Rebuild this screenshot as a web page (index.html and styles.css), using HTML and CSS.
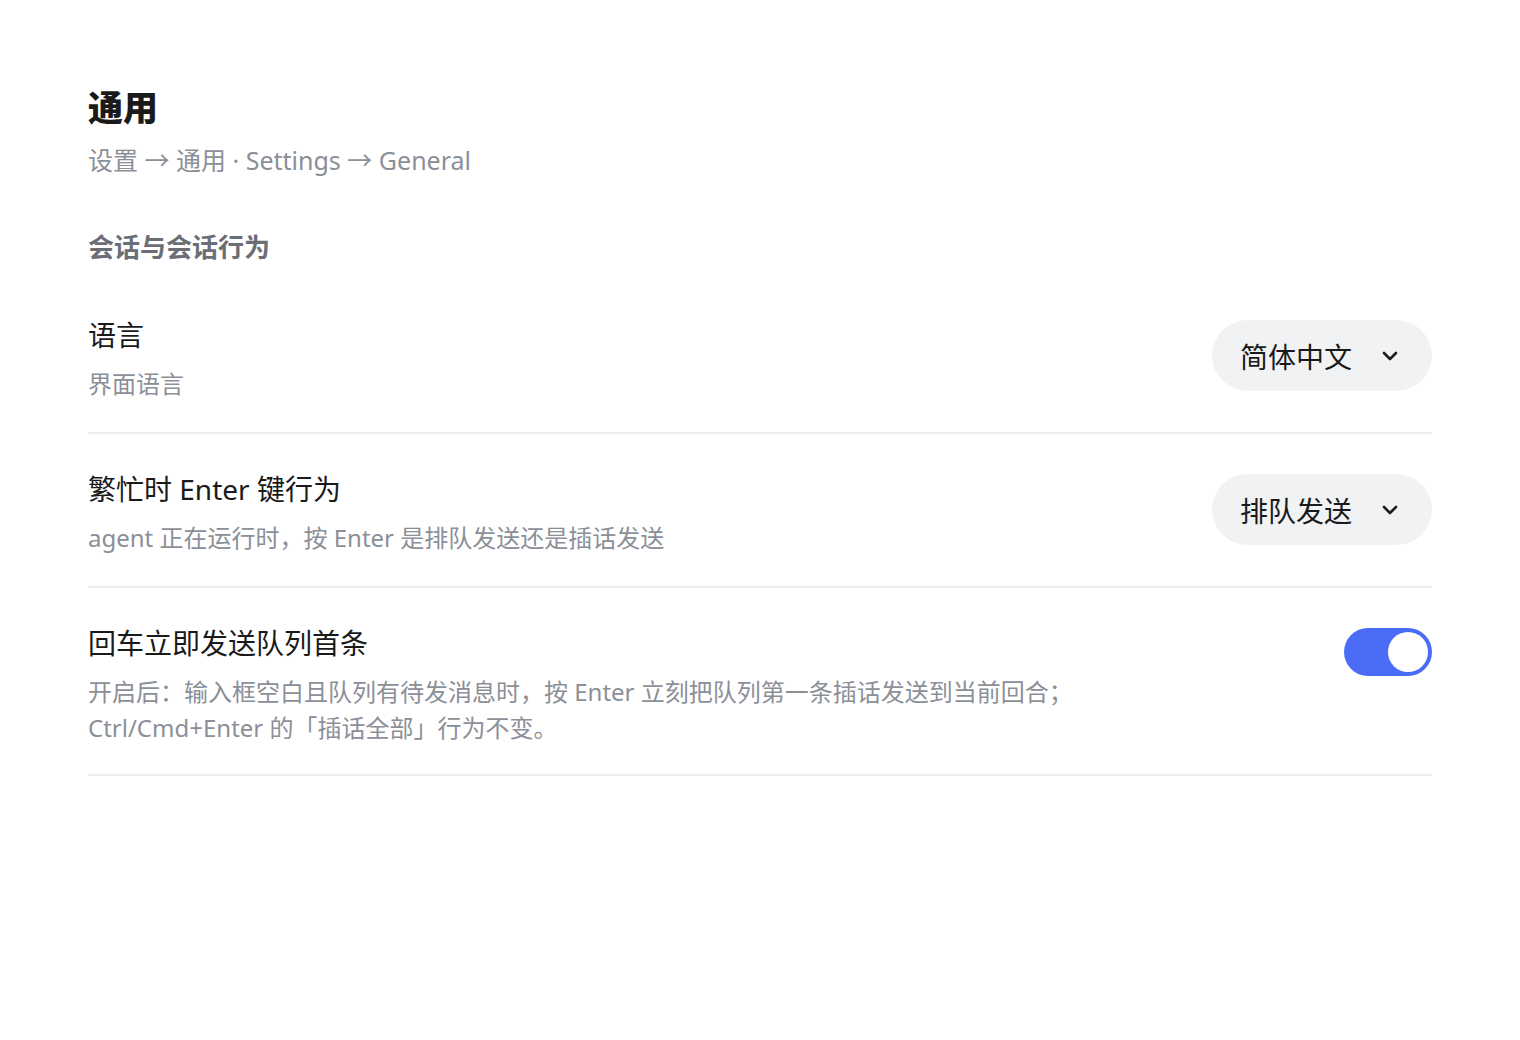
FILE: index.html
```html
<!DOCTYPE html>
<html lang="zh-CN">

<head>
    <meta charset="UTF-8">
    <title>通用 - 设置</title>
    <link rel="stylesheet" href="styles.css">
</head>

<body>

    <main class="settings">
        <header class="page-head">
            <h1>通用</h1>
            <p class="crumbs">设置 → 通用 · Settings → General</p>
        </header>

        <section class="group">
            <h2>会话与会话行为</h2>

            <div class="row">
                <div class="row-text">
                    <div class="row-title">语言</div>
                    <div class="row-desc">界面语言</div>
                </div>
                <button class="select" type="button">
                    <span>简体中文</span>
                    <svg width="16" height="10" viewBox="0 0 16 10">
                        <path d="M2 2l6 6 6-6" fill="none" stroke="#1c1c1e" stroke-width="2.6"
                            stroke-linecap="round" stroke-linejoin="round" />
                    </svg>
                </button>
            </div>

            <div class="row">
                <div class="row-text">
                    <div class="row-title">繁忙时 Enter 键行为</div>
                    <div class="row-desc">agent 正在运行时，按 Enter 是排队发送还是插话发送</div>
                </div>
                <button class="select" type="button">
                    <span>排队发送</span>
                    <svg width="16" height="10" viewBox="0 0 16 10">
                        <path d="M2 2l6 6 6-6" fill="none" stroke="#1c1c1e" stroke-width="2.6"
                            stroke-linecap="round" stroke-linejoin="round" />
                    </svg>
                </button>
            </div>

            <div class="row">
                <div class="row-text">
                    <div class="row-title">回车立即发送队列首条</div>
                    <div class="row-desc">开启后：输入框空白且队列有待发消息时，按 Enter 立刻把队列第一条插话发送到当前回合；<br>Ctrl/Cmd+Enter 的「插话全部」行为不变。</div>
                </div>
                <label class="toggle">
                    <input type="checkbox" checked>
                    <span class="knob"></span>
                </label>
            </div>
        </section>
    </main>

</body>

</html>
```

FILE: styles.css
```css
* {
    box-sizing: border-box;
    font-family: "Noto Sans", "Noto Sans CJK SC", sans-serif;
}

body {
    margin: 0;
    background: #fff;
    color: #1c1c1e;
}

.settings {
    padding: 84px 88px;
}

.page-head h1 {
    margin: 0;
    font-size: 35px;
    line-height: 48px;
    font-weight: 800;
    color: #1a1a1a;
}

.crumbs {
    margin: 9px 0 0;
    font-size: 25px;
    line-height: 38px;
    color: #8b8f98;
}

.group {
    margin-top: 49px;
}

.group h2 {
    margin: 0;
    font-size: 26px;
    line-height: 38px;
    font-weight: 700;
    color: #6b6e75;
}

.row {
    display: flex;
    justify-content: space-between;
    align-items: flex-start;
    gap: 40px;
    padding: 34px 0 30px;
    border-bottom: 2px solid #ededf1;
}

.group h2 + .row {
    padding-top: 48px;
}

.row:last-child {
    padding-bottom: 28px;
}

.row-title {
    font-size: 28px;
    line-height: 42px;
    color: #1a1a1a;
}

.row-desc {
    margin-top: 10px;
    font-size: 24px;
    line-height: 36px;
    color: #8b8f98;
}

.select {
    display: flex;
    align-items: center;
    gap: 30px;
    margin-top: 6px;
    height: 71px;
    padding: 0 34px 0 28px;
    border: none;
    border-radius: 36px;
    background: #f1f2f4;
    font-size: 28px;
    color: #1a1a1a;
    cursor: pointer;
}

.toggle {
    position: relative;
    display: block;
    flex-shrink: 0;
    width: 88px;
    height: 48px;
    margin-top: 6px;
    border-radius: 24px;
    background: #4a6cf7;
    cursor: pointer;
}

.toggle input {
    display: none;
}

.knob {
    position: absolute;
    top: 4px;
    right: 4px;
    width: 40px;
    height: 40px;
    border-radius: 50%;
    background: #fff;
}
```
